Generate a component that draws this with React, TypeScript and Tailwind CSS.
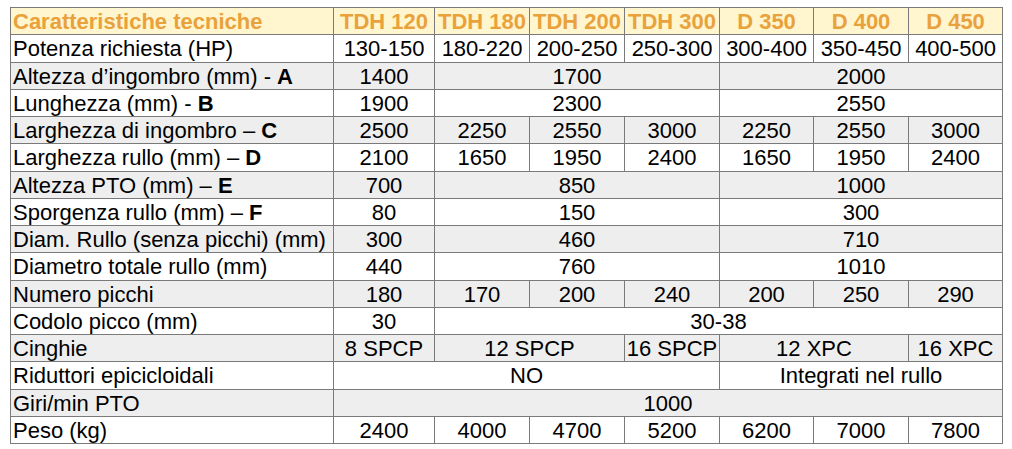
type Cell = { v: string; span?: number };
type Row = { label: React.ReactNode; cells: Cell[] };

const c = (v: string, span = 1): Cell => ({ v, span });

const rows: Row[] = [
  { label: 'Potenza richiesta (HP)', cells: ['130-150', '180-220', '200-250', '250-300', '300-400', '350-450', '400-500'].map((v) => c(v)) },
  { label: <>Altezza d’ingombro (mm) - <b>A</b></>, cells: [c('1400'), c('1700', 3), c('2000', 3)] },
  { label: <>Lunghezza (mm) - <b>B</b></>, cells: [c('1900'), c('2300', 3), c('2550', 3)] },
  { label: <>Larghezza di ingombro – <b>C</b></>, cells: ['2500', '2250', '2550', '3000', '2250', '2550', '3000'].map((v) => c(v)) },
  { label: <>Larghezza rullo (mm) – <b>D</b></>, cells: ['2100', '1650', '1950', '2400', '1650', '1950', '2400'].map((v) => c(v)) },
  { label: <>Altezza PTO (mm) – <b>E</b></>, cells: [c('700'), c('850', 3), c('1000', 3)] },
  { label: <>Sporgenza rullo (mm) – <b>F</b></>, cells: [c('80'), c('150', 3), c('300', 3)] },
  { label: 'Diam. Rullo (senza picchi) (mm)', cells: [c('300'), c('460', 3), c('710', 3)] },
  { label: 'Diametro totale rullo (mm)', cells: [c('440'), c('760', 3), c('1010', 3)] },
  { label: 'Numero picchi', cells: ['180', '170', '200', '240', '200', '250', '290'].map((v) => c(v)) },
  { label: 'Codolo picco (mm)', cells: [c('30'), c('30-38', 6)] },
  { label: 'Cinghie', cells: [c('8 SPCP'), c('12 SPCP', 2), c('16 SPCP'), c('12 XPC', 2), c('16 XPC')] },
  { label: 'Riduttori epicicloidali', cells: [c('NO', 4), c('Integrati nel rullo', 3)] },
  { label: 'Giri/min PTO', cells: [c('1000', 7)] },
  { label: 'Peso (kg)', cells: ['2400', '4000', '4700', '5200', '6200', '7000', '7800'].map((v) => c(v)) },
];

const models = ['TDH 120', 'TDH 180', 'TDH 200', 'TDH 300', 'D 350', 'D 400', 'D 450'];
const widths = [323, 101, 95, 95, 95, 94, 95, 94];

export default function App() {
  return (
    <div className="w-[1012px] h-[449px] bg-white pt-[7px] pl-[10px] font-['Liberation_Sans',Arial,sans-serif] text-[22px] text-black leading-none">
      <table className="border-collapse table-fixed w-[992px] border border-[#7a7a7a]">
        <colgroup>
          {widths.map((w, i) => (
            <col key={i} style={{ width: w }} />
          ))}
        </colgroup>
        <tbody>
          <tr className="h-[27.25px] bg-[#fff5ce] text-[#e9a23b] font-bold">
            <td className="border border-[#7a7a7a] px-[2px] pt-[2px] whitespace-nowrap">Caratteristiche tecniche</td>
            {models.map((m) => (
              <td key={m} className="border border-[#7a7a7a] text-center pt-[2px] whitespace-nowrap">
                {m}
              </td>
            ))}
          </tr>
          {rows.map((r, i) => (
            <tr key={i} className={`h-[27.25px] ${i % 2 === 1 ? 'bg-[#eeeeee]' : 'bg-white'}`}>
              <td className="border border-[#7a7a7a] px-[2px] pt-[2px] whitespace-nowrap">{r.label}</td>
              {r.cells.map((cell, j) => (
                <td key={j} colSpan={cell.span} className="border border-[#7a7a7a] text-center pt-[2px] whitespace-nowrap">
                  {cell.v}
                </td>
              ))}
            </tr>
          ))}
        </tbody>
      </table>
    </div>
  );
}
